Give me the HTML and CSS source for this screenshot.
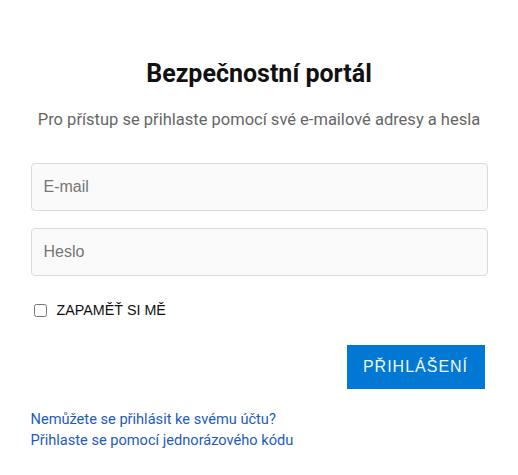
FILE: index.html
```html
<!DOCTYPE html>
<html lang="cs">
<head>
<meta charset="utf-8">
<title>Bezpečnostní portál</title>
<link rel="stylesheet" href="styles.css">
</head>
<body>
<main class="login">
  <h1 class="title">Bezpečnostní portál</h1>
  <p class="subtitle">Pro přístup se přihlaste pomocí své e-mailové adresy a hesla</p>
  <form class="form">
    <input class="field" type="email" placeholder="E-mail">
    <input class="field" type="password" placeholder="Heslo">
    <label class="remember"><input class="check" type="checkbox"><span>ZAPAMĚŤ SI MĚ</span></label>
    <div class="actions"><button class="submit" type="button">PŘIHLÁŠENÍ</button></div>
  </form>
  <div class="links">
    <a class="link" href="#">Nemůžete se přihlásit ke svému účtu?</a>
    <a class="link" href="#">Přihlaste se pomocí jednorázového kódu</a>
  </div>
</main>
</body>
</html>
```

FILE: styles.css
```css
html, body {
  margin: 0;
  padding: 0;
  background: #ffffff;
}

body {
  font-family: Roboto, "Liberation Sans", sans-serif;
  color: #111;
}

.login {
  width: 457px;
  margin: 0 auto;
  padding-top: 59px;
  display: flex;
  flex-direction: column;
}

.title {
  margin: 0;
  font-size: 25px;
  line-height: 30px;
  font-weight: 700;
  text-align: center;
  color: #111;
}

.subtitle {
  margin: 21px 0 0;
  font-size: 16.5px;
  line-height: 20px;
  text-align: center;
  color: #666;
  white-space: nowrap;
}

.form {
  margin-top: 33px;
  display: flex;
  flex-direction: column;
}

.field {
  box-sizing: border-box;
  height: 48px;
  width: 100%;
  margin: 0 0 17px;
  padding: 0 12px;
  border: 1px solid #dcdcdc;
  border-radius: 4px;
  background: #fafafa;
  font-family: "Liberation Sans", Arial, sans-serif;
  font-size: 16px;
  color: #333;
  outline: none;
}

.field:last-of-type {
  margin-bottom: 0;
}

.field::placeholder {
  color: #767676;
}

.remember {
  margin-top: 24px;
  height: 20px;
  display: flex;
  align-items: center;
  font-family: "Liberation Sans", Arial, sans-serif;
  font-size: 14.3px;
  color: #111;
}

.check {
  width: 13px;
  height: 13px;
  margin: 0 10px 0 3px;
}

.actions {
  margin-top: 25px;
  display: flex;
  justify-content: flex-end;
}

.submit {
  height: 44px;
  width: 138px;
  margin-right: 3px;
  padding: 0;
  border: none;
  border-radius: 0;
  background: #0078d4;
  color: #f2f7fc;
  font-family: "Liberation Sans", Arial, sans-serif;
  font-size: 16px;
  letter-spacing: 1px;
}

.links {
  margin-top: 20px;
  display: flex;
  flex-direction: column;
}

.link {
  font-size: 14.6px;
  line-height: 21px;
  color: #1d5bbf;
  text-decoration: none;
}
```
